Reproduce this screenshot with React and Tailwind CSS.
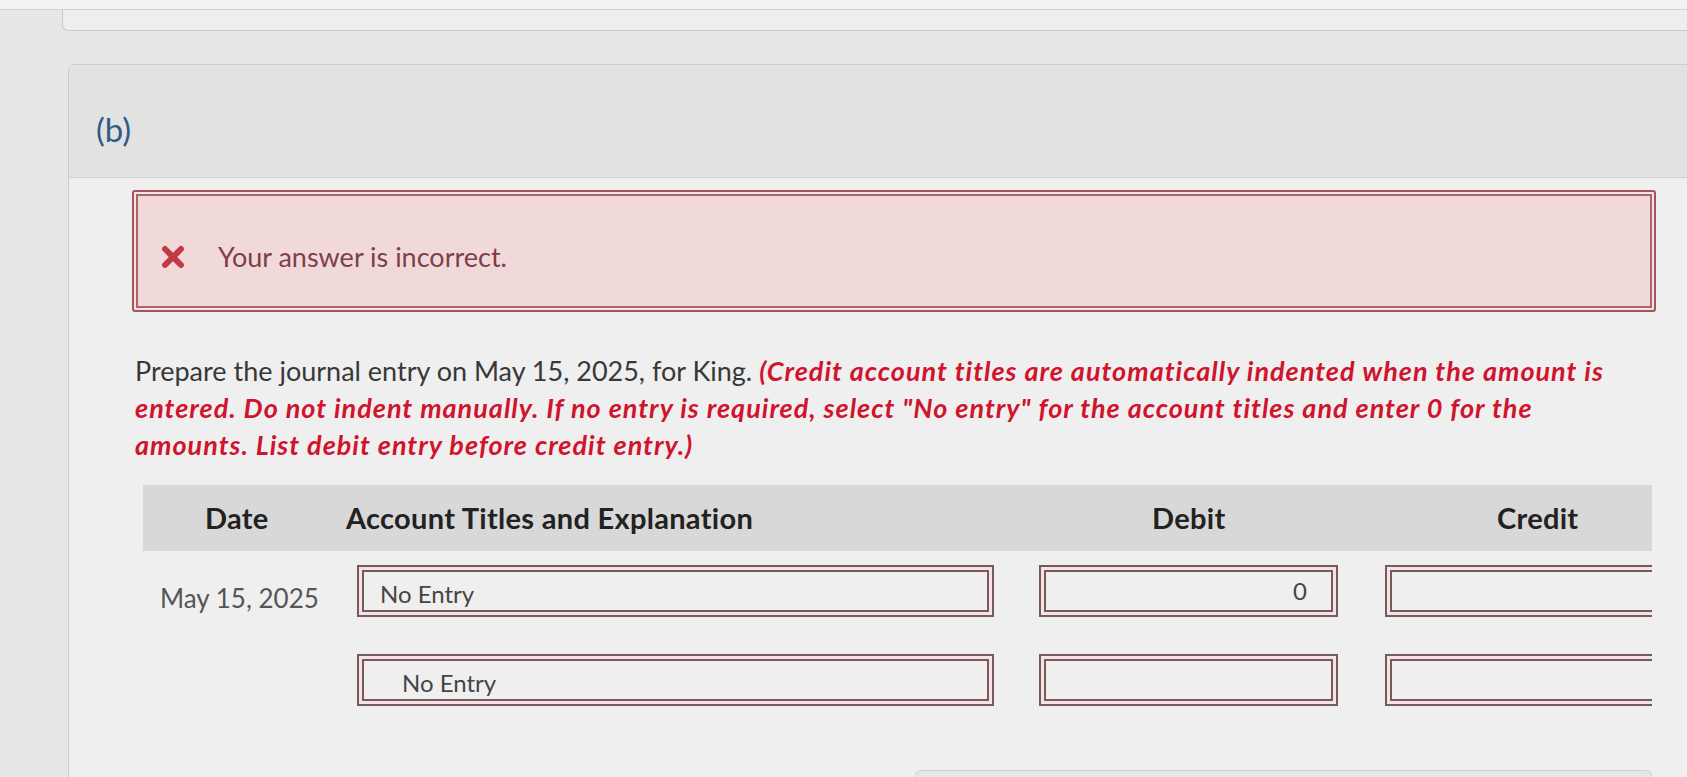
import React from 'react';

// Double-ruled answer field used in the journal table
function EntryField({ value, align = 'left', indent = false, className = '' }) {
  return (
    <div className={`h-[52px] border-2 border-[#765b5e] bg-[#f7e3e3] p-[3px] ${className}`}>
      <div
        className={`flex h-full items-center border-2 border-[#765b5e] bg-[#efefef] text-[24px] text-[#454545] ${
          align === 'right' ? 'justify-end pr-[24px]' : indent ? 'pl-[38px] pt-[6px]' : 'pl-[16px] pt-[6px]'
        }`}
      >
        {value}
      </div>
    </div>
  );
}

function IncorrectIcon() {
  return (
    <svg width="26" height="26" viewBox="0 0 26 26" className="shrink-0">
      <path d="M5 5 L21 21 M21 5 L5 21" stroke="#c23845" strokeWidth="6" strokeLinecap="round" />
    </svg>
  );
}

export default function App() {
  const rows = [
    { date: 'May 15, 2025', account: 'No Entry', debit: '0', credit: '', indent: false },
    { date: '', account: 'No Entry', debit: '', credit: '', indent: true },
  ];

  return (
    <div className="h-[777px] w-full overflow-hidden bg-[#e7e7e7] font-['Lato',sans-serif]">
      {/* previous part, only its bottom edge shows */}
      <div className="h-[10px] border-b border-[#d3d3d3] bg-[#f2f2f2]" />
      <div className="ml-[62px] h-[21px] rounded-bl-md border-b border-l border-[#c9c9c9] bg-[#eeeeee]" />

      <section className="ml-[68px] mt-[33px] rounded-tl-md border-l border-t border-[#cdcdcd]">
        {/* part label */}
        <div className="flex h-[112px] items-center bg-[#e2e2e2] pl-[27px] pt-[18px] text-[33px] text-[#2f5c86]">(b)</div>

        <div className="border-t border-[#d2d2d2] bg-[#efefef] pb-[40px] pl-[63px] pr-[31px] pt-[12px]">
          {/* feedback */}
          <div className="rounded-[3px] border-2 border-[#a4545c] bg-[#f6e4e4] p-[2px]">
            <div className="flex h-[114px] items-center gap-[32px] border-2 border-[#b0636b] bg-[#f1d9da] pl-[22px] pt-[12px]">
              <IncorrectIcon />
              <span className="text-[27px] text-[#7e3f49]">Your answer is incorrect.</span>
            </div>
          </div>

          {/* question prompt */}
          <p className="mt-[40px] pl-[3px] pr-[26px] text-[27px] leading-[37px] text-[#383838]">
            Prepare the journal entry on May 15, 2025, for King.{' '}
            <span className="font-bold italic tracking-[1px] text-[#d0142e]">
              (Credit account titles are automatically indented when the amount is entered. Do not indent manually. If
              no entry is required, select "No entry" for the account titles and enter 0 for the amounts. List debit
              entry before credit entry.)
            </span>
          </p>

          {/* journal table */}
          <div className="ml-[11px] mr-[4px] mt-[22px] overflow-hidden">
            <div className="grid h-[66px] grid-cols-[203px_665px_352px_290px] items-center bg-[#d8d8d8] text-[29px] font-bold tracking-[0.3px] text-[#222]">
              <div className="pl-[62px]">Date</div>
              <div>Account Titles and Explanation</div>
              <div className="pl-[141px]">Debit</div>
              <div className="pl-[134px]">Credit</div>
            </div>

            <div className="mt-[12px] flex flex-col gap-[36px]">
              {rows.map((r, i) => (
                <div key={i} className="grid grid-cols-[203px_665px_352px_290px] items-center">
                  <div className="pl-[17px] pt-[16px] text-[26px] text-[#555]">{r.date}</div>
                  <EntryField value={r.account} indent={r.indent} className="ml-[11px] w-[637px]" />
                  <EntryField value={r.debit} align="right" className="ml-[28px] w-[299px]" />
                  <EntryField value={r.credit} className="ml-[22px] w-[320px]" />
                </div>
              ))}
            </div>
          </div>

          {/* next block peeking in at the bottom */}
          <div className="ml-auto mr-[4px] mt-[64px] h-[24px] w-[737px] rounded-t-md border-x border-t border-[#d0d0d0] bg-[#e6e6e6]" />
        </div>
      </section>
    </div>
  );
}
